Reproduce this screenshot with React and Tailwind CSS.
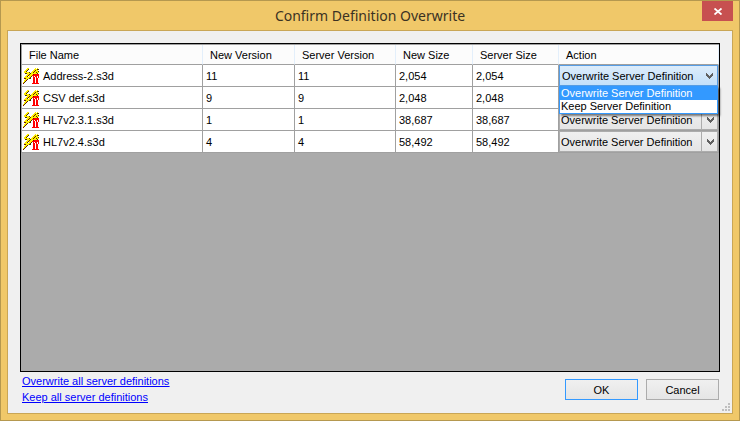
import { useState } from "react";

const OPTIONS = ["Overwrite Server Definition", "Keep Server Definition"];

const FILES = [
  { name: "Address-2.s3d", newVersion: "11", serverVersion: "11", newSize: "2,054", serverSize: "2,054" },
  { name: "CSV def.s3d", newVersion: "9", serverVersion: "9", newSize: "2,048", serverSize: "2,048" },
  { name: "HL7v2.3.1.s3d", newVersion: "1", serverVersion: "1", newSize: "38,687", serverSize: "38,687" },
  { name: "HL7v2.4.s3d", newVersion: "4", serverVersion: "4", newSize: "58,492", serverSize: "58,492" },
];

// Pixel map: y yellow, k dark, m maroon, r red, w white
const ICON = [
  "....yy......y.y.",
  "...yyk.....yyykk",
  "..yyk.....yykyy.",
  ".yyk.....yymyyyk",
  ".yyyyyk.yykyykyy",
  "..kkyyykyyyyyyk.",
  "....yykyyymrrrrr",
  "...yymyyyrrrrrrr",
  "..yyk.yyk.rwrrwr",
  ".yyyyyyk..rrwrwr",
  ".mkyyykk..rrwrr.",
  "..yyk.....rrwrr.",
  ".yym......rrwrr.",
  ".yk.......rrwrr.",
  "yk........rrwrr.",
  "m........rrrrrrr",
];

const INK = { y: "#ffee00", k: "#4a3200", m: "#800000", r: "#ff0000", w: "#ffffff" };

function FileIcon() {
  return (
    <svg className="h-4 w-4 shrink-0" viewBox="0 0 16 16" shapeRendering="crispEdges" aria-hidden="true">
      {ICON.flatMap((row, y) =>
        [...row].map((c, x) =>
          INK[c] ? <rect key={`${x}-${y}`} x={x} y={y} width="1" height="1" fill={INK[c]} /> : null
        )
      )}
    </svg>
  );
}

function Chevron() {
  return (
    <svg className="h-[6px] w-[7px]" viewBox="0 0 7 6" shapeRendering="crispEdges" aria-hidden="true">
      <path d="M0 0h1v1h1v1h1v1h1v-1h1v-1h1v-1h1v3h-1v1h-1v1h-1v1h-1v-1h-1v-1h-1v-1h-1z" fill="#606060" />
    </svg>
  );
}

function ActionSelect({ file, open }) {
  const [value, setValue] = useState(OPTIONS[0]);
  return (
    <div className="relative h-[21px]">
      <select
        aria-label={`Action for ${file}`}
        value={value}
        onChange={(e) => setValue(e.target.value)}
        className={
          open
            ? "block h-[21px] w-full appearance-none border border-[#569de5] bg-linear-to-b from-[#dcecfb] to-[#c3e0fa] pr-4 pl-[2px] outline-none"
            : "block h-[21px] w-full appearance-none border border-[#acacac] bg-linear-to-b from-[#f0f0f0] to-[#e5e5e5] pr-4 pl-px outline-none"
        }
      >
        {OPTIONS.map((o) => (
          <option key={o}>{o}</option>
        ))}
      </select>
      <span
        className={
          open
            ? "pointer-events-none absolute inset-y-0 right-0 flex w-[17px] items-center justify-center"
            : "pointer-events-none absolute inset-y-0 right-0 flex w-[17px] items-center justify-center border-l border-[#acacac]"
        }
      >
        <Chevron />
      </span>
      {open && (
        <ul
          role="listbox"
          aria-label="Action choices"
          className="absolute inset-x-0 top-full z-10 border border-[#3399ff] bg-white leading-[13px] shadow-[2px_2px_2px_rgba(0,0,0,0.5)]"
        >
          {OPTIONS.map((o) => (
            <li
              key={o}
              role="option"
              aria-selected={o === value}
              onClick={() => setValue(o)}
              className={o === value ? "bg-[#3399ff] px-px text-white" : "px-px"}
            >
              {o}
            </li>
          ))}
        </ul>
      )}
    </div>
  );
}

const HEAD = "h-5 border-r border-b border-r-[#e3effb] border-b-[#a0a0a0] bg-[#fcfcfc] px-[7px] text-left font-normal";
const CELL = "h-[22px] border-r border-b border-[#a0a0a0] bg-white px-[3px]";

export default function App() {
  return (
    <main className="flex min-h-screen flex-col border border-[#b5984f] bg-[#f0c869] px-[6px] pb-[6px] font-['Liberation_Sans',Arial,sans-serif] text-[11px] leading-4 text-black">
      <header className="grid h-[29px] shrink-0 grid-cols-[1fr_auto_1fr] items-start">
        <h1 className="col-start-2 font-['Noto_Sans','Open_Sans',sans-serif] text-[14px] leading-[29px] text-[#3b3223]">
          Confirm Definition Overwrite
        </h1>
        <button type="button" aria-label="Close" className="flex h-5 w-[31px] items-center justify-center justify-self-end bg-[#c75050]">
          <svg className="h-[7px] w-[8px]" viewBox="0 0 8 7" aria-hidden="true">
            <path d="M0.500 0.500L7.500 6.500M7.500 0.500L0.500 6.500" stroke="#fff" strokeWidth="1.800" fill="none" />
          </svg>
        </button>
      </header>

      <section className="relative flex flex-1 flex-col border border-[#c9a656] bg-[#f0f0f0] px-3 pt-3 pb-2">
        <div className="flex-1 border border-black bg-[#ababab]">
          <table className="w-full table-fixed border-separate border-spacing-0 border-t border-l border-[#a0a0a0]">
            <colgroup>
              <col className="w-[181px]" />
              <col className="w-[92px]" />
              <col className="w-[101px]" />
              <col className="w-[77px]" />
              <col className="w-[86px]" />
              <col />
            </colgroup>
            <thead>
              <tr>
                <th scope="col" className={HEAD}>File Name</th>
                <th scope="col" className={HEAD}>New Version</th>
                <th scope="col" className={HEAD}>Server Version</th>
                <th scope="col" className={HEAD}>New Size</th>
                <th scope="col" className={HEAD}>Server Size</th>
                <th scope="col" className={HEAD}>Action</th>
              </tr>
            </thead>
            <tbody>
              {FILES.map((f, i) => (
                <tr key={f.name}>
                  <td className="h-[22px] border-r border-b border-[#a0a0a0] bg-white px-px">
                    <span className="flex items-center gap-1">
                      <FileIcon />
                      {f.name}
                    </span>
                  </td>
                  <td className={CELL}>{f.newVersion}</td>
                  <td className={CELL}>{f.serverVersion}</td>
                  <td className={CELL}>{f.newSize}</td>
                  <td className={CELL}>{f.serverSize}</td>
                  <td className="h-[22px] border-r border-b border-[#a0a0a0] bg-white p-0">
                    <ActionSelect file={f.name} open={i === 0} />
                  </td>
                </tr>
              ))}
            </tbody>
          </table>
        </div>

        <footer className="flex items-start justify-between">
          <nav className="flex flex-col items-start pt-px pl-[2px] text-[#0000ff] underline">
            <a href="#overwrite-all">Overwrite all server definitions</a>
            <a href="#keep-all">Keep all server definitions</a>
          </nav>
          <div className="flex gap-2 pt-[7px] pr-px">
            <button type="button" className="h-[21px] w-[73px] border border-[#3399ff] bg-linear-to-b from-[#f0f0f0] to-[#e5e5e5]">
              OK
            </button>
            <button type="button" className="h-[21px] w-[73px] border border-[#acacac] bg-linear-to-b from-[#f0f0f0] to-[#e5e5e5]">
              Cancel
            </button>
          </div>
        </footer>

        <svg className="absolute right-[2px] bottom-[2px] h-2 w-2" viewBox="0 0 8 8" shapeRendering="crispEdges" aria-hidden="true">
          <path d="M6 0h2v2H6zM3 3h2v2H3zM6 3h2v2H6zM0 6h2v2H0zM3 6h2v2H3zM6 6h2v2H6z" fill="#bfbfbf" />
        </svg>
      </section>
    </main>
  );
}
